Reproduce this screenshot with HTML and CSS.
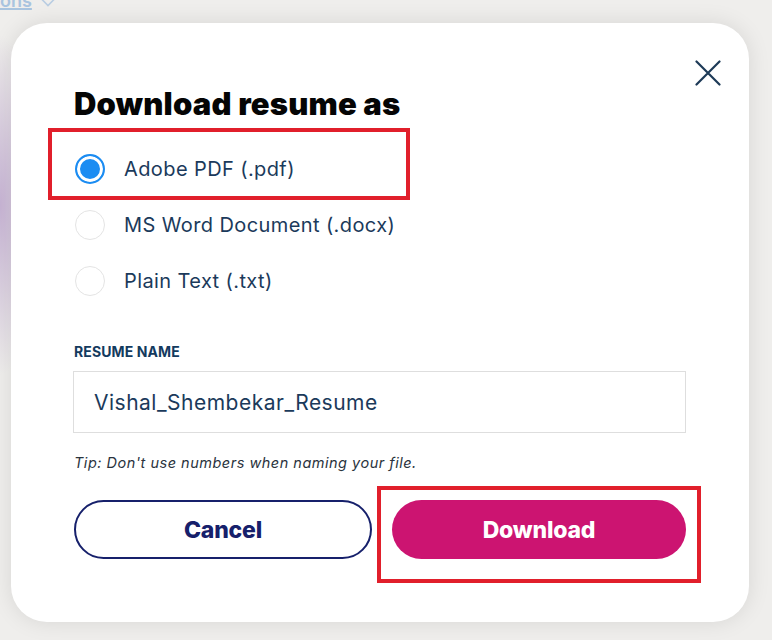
FILE: index.html
```html
<!DOCTYPE html>
<html lang="en">
<head>
<meta charset="utf-8">
<title>Download resume as</title>
<link rel="stylesheet" href="styles.css">
</head>
<body>
<div class="backdrop-top">
  <a class="options-link" href="#">ons</a>
  <svg class="options-chev" width="14" height="8" viewBox="0 0 14 8"><path d="M1 0.5 L7 6.5 L13 0.5" fill="none" stroke="#b9cde2" stroke-width="1.6"/></svg>
</div>
<div class="modal">
  <button class="close" aria-label="Close">
    <svg width="26" height="26" viewBox="0 0 26 26"><path d="M1.5 1.5 L24.5 24.5 M24.5 1.5 L1.5 24.5" fill="none" stroke="#1d3a57" stroke-width="2.2" stroke-linecap="round"/></svg>
  </button>
  <h1 class="title">Download resume as</h1>
  <div class="options">
    <label class="option"><span class="radio radio-on"></span><span class="opt-text">Adobe PDF (.pdf)</span></label>
    <label class="option"><span class="radio"></span><span class="opt-text">MS Word Document (.docx)</span></label>
    <label class="option"><span class="radio"></span><span class="opt-text">Plain Text (.txt)</span></label>
  </div>
  <div class="field-label">RESUME NAME</div>
  <div class="input">Vishal_Shembekar_Resume</div>
  <div class="tip">Tip: Don't use numbers when naming your file.</div>
  <div class="actions">
    <button class="btn btn-cancel">Cancel</button>
    <button class="btn btn-download">Download</button>
  </div>
</div>
<div class="mark mark-1"></div>
<div class="mark mark-2"></div>
</body>
</html>
```
FILE: styles.css
```css
html, body {
  margin: 0;
  padding: 0;
}
body {
  width: 772px;
  height: 640px;
  overflow: hidden;
  position: relative;
  font-family: Inter, "Noto Sans", sans-serif;
  background:
    radial-gradient(ellipse 40px 170px at 0px 205px, rgba(186, 160, 205, 0.75), rgba(200, 180, 215, 0) 100%),
    #efeeec;
}
.backdrop-top {
  height: 23px;
  display: flex;
  align-items: flex-start;
  gap: 9px;
  overflow: hidden;
}
.options-link {
  display: block;
  margin-top: -9px;
  font-size: 18px;
  line-height: 20px;
  font-weight: 600;
  color: #a9c4df;
  text-decoration: underline;
  text-decoration-thickness: 1.5px;
}
.options-chev {
  margin-top: -1px;
}
.modal {
  position: relative;
  box-sizing: border-box;
  width: 738px;
  height: 599px;
  margin-left: 11px;
  padding: 62px 63px 0 63px;
  background: #ffffff;
  border-radius: 36px;
  box-shadow: 0 0 22px rgba(0, 0, 0, 0.10);
  display: flex;
  flex-direction: column;
}
.close {
  position: absolute;
  top: 37px;
  right: 28px;
  width: 26px;
  height: 26px;
  padding: 0;
  border: 0;
  background: none;
}
.close svg { display: block; }
.title {
  margin: 0;
  font-size: 31px;
  line-height: 38px;
  font-weight: 900;
  color: #050505;
  letter-spacing: 0.2px;
}
.options {
  margin-top: 18px;
  display: flex;
  flex-direction: column;
}
.option {
  height: 56px;
  display: flex;
  align-items: center;
  gap: 19px;
}
.radio {
  box-sizing: border-box;
  width: 30px;
  height: 30px;
  border-radius: 50%;
  border: 1px solid #e4e4e4;
  flex: none;
  margin-left: 1px;
}
.radio-on {
  border: 2px solid #1b8cf2;
  background: #1b8cf2;
  box-shadow: inset 0 0 0 3px #ffffff;
}
.opt-text {
  font-size: 20px;
  color: #1b3a5b;
  letter-spacing: 0.4px;
}
.field-label {
  margin-top: 35px;
  font-size: 14px;
  line-height: 16px;
  font-weight: 700;
  color: #133a5e;
  letter-spacing: 0.1px;
}
.input {
  margin-top: 11px;
  margin-left: -1px;
  box-sizing: border-box;
  height: 62px;
  border: 1px solid #dedede;
  display: flex;
  align-items: center;
  padding-left: 20px;
  font-size: 21px;
  letter-spacing: 0.5px;
  color: #1b3a5b;
}
.tip {
  margin-top: 21px;
  font-size: 14.5px;
  line-height: 18px;
  font-style: italic;
  letter-spacing: 0.5px;
  color: #2a333d;
}
.actions {
  margin-top: 28px;
  display: flex;
  gap: 20px;
}
.btn {
  flex: 1;
  height: 59px;
  border-radius: 30px;
  font-family: Inter, "Noto Sans", sans-serif;
  font-size: 23px;
  font-weight: 800;
  letter-spacing: -0.2px;
  padding: 0;
}
.btn-cancel {
  background: #ffffff;
  border: 2px solid #16206b;
  color: #16206b;
}
.btn-download {
  background: #cc1471;
  border: 0;
  color: #ffffff;
}
.mark {
  position: absolute;
  box-sizing: border-box;
  border: 4px solid #e11f2b;
}
.mark-1 {
  left: 48px;
  top: 128px;
  width: 362px;
  height: 72px;
}
.mark-2 {
  left: 377px;
  top: 486px;
  width: 324px;
  height: 97px;
}
```
